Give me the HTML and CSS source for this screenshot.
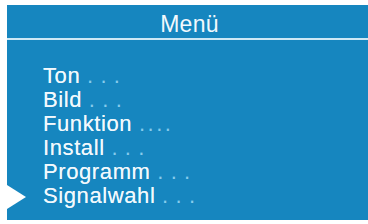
FILE: index.html
```html
<!DOCTYPE html>
<html>
<head>
<meta charset="utf-8">
<link rel="stylesheet" href="styles.css">
</head>
<body>
<div class="screen">
  <div class="panel">
    <div class="header">Menü</div>
    <ul class="menu">
      <li>Ton<span class="dots"> . . .</span></li>
      <li>Bild<span class="dots"> . . .</span></li>
      <li>Funktion <span class="dots tight">. . . .</span></li>
      <li>Install<span class="dots"> . . .</span></li>
      <li>Programm<span class="dots"> . . .</span></li>
      <li class="active">Signalwahl<span class="dots"> . . .</span></li>
    </ul>
  </div>
</div>
</body>
</html>
```
FILE: styles.css
```css
html, body {
  margin: 0;
  padding: 0;
  background: #ffffff;
}
.screen {
  width: 368px;
  height: 224px;
  padding: 5px 0 4px 7px;
  box-sizing: border-box;
}
.panel {
  height: 100%;
  background: #1686bf;
  font-family: "Liberation Sans", Arial, sans-serif;
  color: #f2f9fd;
}
.header {
  height: 27px;
  padding-top: 6px;
  border-bottom: 2px solid #cde8f5;
  text-align: center;
  font-size: 23px;
  line-height: 27px;
  padding-left: 4px;
  letter-spacing: 0.3px;
}
.menu {
  list-style: none;
  margin: 0;
  padding: 24px 0 0 36px;
  font-size: 22px;
  line-height: 24px;
  letter-spacing: 0.6px;
  text-shadow: 0 0 0.6px rgba(255, 255, 255, 0.7);
}
.menu li {
  position: relative;
}
.dots {
  color: #86cbec;
  letter-spacing: 0.6px;
  text-shadow: none;
}
.dots.tight {
  letter-spacing: -1.8px;
}
.active::before {
  content: "";
  position: absolute;
  left: -36px;
  top: 1px;
  border-left: 19px solid #ffffff;
  border-top: 12.5px solid transparent;
  border-bottom: 12.5px solid transparent;
}
```
